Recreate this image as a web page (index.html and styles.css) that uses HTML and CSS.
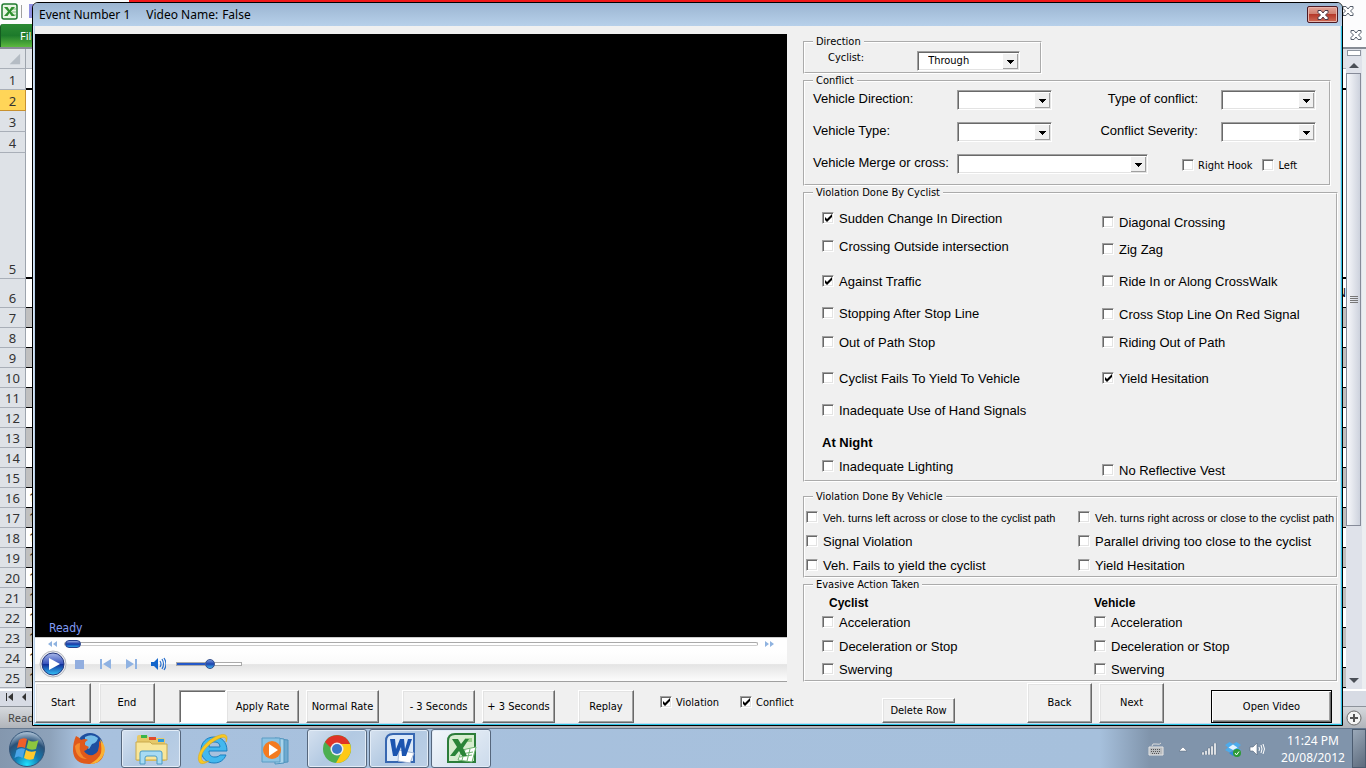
FILE: index.html
```html
<!DOCTYPE html>
<html lang="en">
<head>
<meta charset="utf-8">
<title>Event Number 1</title>
<link rel="stylesheet" href="styles.css">
</head>
<body>
<div class="desktop">
  <div class="excel">
    <div class="accent"><span></span></div>
    <div class="quickbar">
      <svg class="excel-mini" viewBox="0 0 17 17"><rect x="1" y="1" width="15" height="15" rx="2" fill="#e8f5e4" stroke="#1f7a2e" stroke-width="1.500"/><path d="M11 6h4M11 9h4M11 12h4" stroke="#7fba7a"/><path d="M3 4h3.500l2 3 2-3H14l-4 4.500 4 4.500h-3.500l-2-3-2 3H3l4-4.500z" fill="#2f8f2f"/></svg>
      <span class="bar-sep"></span><span class="save-chip"></span>
      <svg class="x-mark" viewBox="0 0 12 10"><path d="M1 .5h3l2 2.500 2-2.500h3v2L8.500 5 11 7.500v2H8L6 7 4 9.500H1v-2L3.500 5 1 2.500z" fill="#fff" stroke="#555e6b"/></svg>
    </div>
    <div class="ribbon">
      <span class="file-tab">File</span>
      <svg class="x-mark ribbon-x" viewBox="0 0 12 10"><path d="M1 .5h3l2 2.500 2-2.500h3v2L8.500 5 11 7.500v2H8L6 7 4 9.500H1v-2L3.500 5 1 2.500z" fill="#fff" stroke="#555e6b"/></svg>
    </div>
    <div class="sheet-area">
      <table class="sheet">
        <tbody>
        <tr class="letters"><th><svg viewBox="0 0 26 20" class="corner"><path d="M21 5v11H10z" fill="#b5bcc4"/></svg></th><td></td><td class="edge"></td></tr>
        <tr class="short thick"><th>1</th><td></td><td class="edge"></td></tr>
        <tr class="short chosen"><th>2</th><td></td><td class="edge"></td></tr>
        <tr class="short"><th>3</th><td></td><td class="edge">I</td></tr>
        <tr class="short"><th>4</th><td></td><td class="edge"></td></tr>
        <tr class="tall thick"><th>5</th><td></td><td class="edge"><span class="vertical">Parallel driving too close</span></td></tr>
        <tr class="mid line"><th>6</th><td></td><td class="edge">N</td></tr>
        <tr class="line gray"><th>7</th><td></td><td class="edge"></td></tr>
        <tr class="line"><th>8</th><td></td><td class="edge"></td></tr>
        <tr class="line gray"><th>9</th><td></td><td class="edge"></td></tr>
        <tr class="line"><th>10</th><td></td><td class="edge"></td></tr>
        <tr class="line gray"><th>11</th><td></td><td class="edge"></td></tr>
        <tr class="line"><th>12</th><td></td><td class="edge"></td></tr>
        <tr class="line gray"><th>13</th><td></td><td class="edge"></td></tr>
        <tr class="line"><th>14</th><td></td><td class="edge"></td></tr>
        <tr class="line gray"><th>15</th><td></td><td class="edge"></td></tr>
        <tr class="line"><th>16</th><td>1</td><td class="edge"></td></tr>
        <tr class="line gray"><th>17</th><td>1</td><td class="edge"></td></tr>
        <tr class="line"><th>18</th><td>1</td><td class="edge"></td></tr>
        <tr class="line gray"><th>19</th><td>1</td><td class="edge"></td></tr>
        <tr class="line"><th>20</th><td>1</td><td class="edge"></td></tr>
        <tr class="line gray"><th>21</th><td>1</td><td class="edge"></td></tr>
        <tr class="line"><th>22</th><td>1</td><td class="edge"></td></tr>
        <tr class="line gray"><th>23</th><td>1</td><td class="edge"></td></tr>
        <tr class="line"><th>24</th><td>1</td><td class="edge"></td></tr>
        <tr class="line gray"><th>25</th><td>1</td><td class="edge"></td></tr>
        </tbody>
      </table>
      <div class="scrollbar">
        <span class="split"></span>
        <svg viewBox="0 0 16 16" class="scroll-arrow"><path d="M3 11l5-5 5 5z" fill="#4a4f57"/></svg>
        <div class="thumb"><i></i><i></i><i></i><i></i></div>
        <div class="track"></div>
        <svg viewBox="0 0 16 16" class="scroll-arrow"><path d="M3 5l5 5 5-5z" fill="#4a4f57"/></svg>
      </div>
    </div>
    <div class="tabs-row"><svg viewBox="0 0 30 12" class="tab-nav"><path d="M6.500 2v8" stroke="#333"/><path d="M13 2v8L8 6zM26 2v8l-4-4z" fill="#333"/></svg></div>
    <div class="status"><span>Ready</span>
      <svg viewBox="0 0 16 16" class="zoom-plus"><circle cx="8" cy="8" r="7" fill="#f4f4f4" stroke="#6b6b6b"/><path d="M8 4v8M4 8h8" stroke="#555" stroke-width="2"/></svg>
    </div>
  </div>

  <div class="taskbar">
    <button class="start" aria-label="Start menu"><svg viewBox="0 0 38 38"><defs><radialGradient id="orb" cx=".5" cy=".95" r=".9"><stop offset="0" stop-color="#1fe3ff"/><stop offset=".4" stop-color="#1379b0"/><stop offset=".75" stop-color="#2a5178"/><stop offset="1" stop-color="#9fb6cc"/></radialGradient></defs><circle cx="19" cy="19" r="17.500" fill="url(#orb)" stroke="#35567a"/><path d="M11 10q4-3 8-1l-2 9q-4-2-8 0z" fill="#f0602a"/><path d="M20.500 10q4 3 10 0l-2.500 9q-5 2-9.500-1z" fill="#8cc63f"/><path d="M8.500 20q4-3 8.500-1l-2.500 9q-4-3-8 0z" fill="#4aa5e8"/><path d="M18 20q4 3 10 1l-2.500 8q-5 2-9.500-1z" fill="#ffc92e"/></svg></button>
    <button class="app" aria-label="Firefox"><svg viewBox="0 0 34 34"><circle cx="18" cy="14" r="13" fill="#1d4fa0"/><path d="M13 5q7-4 13 1-1 5-6 6l-3 5-4-3z" fill="#74bce8"/><path d="M4 4q3 1 5 4 4-2 7 0-4 2-3 5l4 2q-2 3-5 4 3 5 9 4 7-2 6-14 6 5 5 12-2 11-15 11Q2 32 1 19 1 10 4 4z" fill="#e0591a"/><path d="M28 7q7 8 4 15-4 10-14 10 9-5 11-11 1-7-1-14z" fill="#f9b233"/><path d="M3 14q2-3 5-3-2 12 7 16-11 0-12-13z" fill="#f58a2c"/></svg></button>
    <button class="app open" aria-label="Windows Explorer"><svg viewBox="0 0 34 34"><path d="M3 5q0-2 2-2h8l2 3h14q2 0 2 2v21H3z" fill="#e6c868"/><path d="M7 3h6v3H7z" fill="#39b54a"/><path d="M15 5h7v3h-7z" fill="#e14b2d"/><path d="M24 7h6v3h-6z" fill="#2e9bdc"/><path d="M2 10h14l2 2h15v16H2z" fill="#f8e69a" stroke="#c9a94d"/><path d="M6 32V21q0-2 2-2h18q2 0 2 2v11h-5v-6q0-2-2-2h-8q-2 0-2 2v6z" fill="#a7dbf3" stroke="#4b9ac4"/></svg></button>
    <button class="app" aria-label="Internet Explorer"><svg viewBox="0 0 34 34"><path fill-rule="evenodd" d="M18 5c8 0 13 5 13 14H13c0 4 2 6 6 6 3 0 4-1 5-2h6c-2 5-6 8-12 8C10 31 5 25 5 18S10 5 18 5zm-5 10h11c0-3-2-5-5-5-4 0-6 2-6 5z" fill="#43b8ee" stroke="#1b7fc0"/><path d="M4 31C-2 24 9 9 21 4c9-4 12 0 9 6 1-5-2-6-8-3C12 12 3 22 6 28q2 3 7 1-6 4-9 2z" fill="#f8c822" stroke="#d9a414" stroke-width=".5"/></svg></button>
    <button class="app" aria-label="Media Player"><svg viewBox="0 0 34 34"><path d="M21 7l9 1v22l-9 1z" fill="#6faad0" stroke="#4e93bd"/><path d="M17 6l9 1v24l-9 1z" fill="#a8d4ec" stroke="#4e93bd"/><path d="M4 6h18v24H4z" fill="#8cc3e3" stroke="#5a9cc4"/><circle cx="14" cy="18" r="9" fill="#f47b20"/><path d="M11 12l9 6-9 6z" fill="#fff"/></svg></button>
    <button class="app open" aria-label="Chrome"><svg viewBox="0 0 34 34"><circle cx="17" cy="17" r="14" fill="#4caf50"/><path d="M5 10a14 14 0 0 1 25 2H17a6 6 0 0 0-6 4z" fill="#df3326"/><path d="M30 12a14 14 0 0 1-14 19l6-11q2-4-1-8z" fill="#fdc916"/><circle cx="17" cy="17" r="6.500" fill="#eee"/><circle cx="17" cy="17" r="5" fill="#3a78c9"/></svg></button>
    <button class="app open" aria-label="Word"><svg viewBox="0 0 34 34"><path d="M4 9q0-7 7-7h21v28H4z" fill="#dce9f8" stroke="#3767b1" stroke-width="2"/><path d="M17 18l15 3-4 10-12-2z" fill="#fff" stroke="#a6b8d6"/><path d="M8 7h5l1 10 4-10h4l1 10 3-10h4l-6 17h-4l-1-9-4 9h-4z" fill="#1c55b0"/></svg></button>
    <button class="app open lit" aria-label="Excel"><svg viewBox="0 0 34 34"><path d="M4 9q0-7 7-7h20v28H4z" fill="#d6edcf" stroke="#2c7d3a" stroke-width="2"/><path d="M21 6h7v4h-7z" fill="#9bd08e"/><path d="M18 18l14-3-4 15-14-2z" fill="#fff" stroke="#6bb36e"/><path d="M17 22l12-2M16 25l12-2M21 18l-3 10M26 17l-3 12" stroke="#6bb36e"/><path d="M8 7h6l3 5 4-5h4l-6 9 4 8h-5l-3-5-4 5H6l7-9z" fill="#2a8438"/></svg></button>
    <div class="tray">
      <svg class="t-key" viewBox="0 0 16 14"><path d="M4 4q0-3 4-2t5-1" fill="none" stroke="#ddd"/><path d="M1 5h14v8H1z" fill="#b9bcbf" stroke="#e5e5e5"/><path d="M3 7.500h10M3 9.500h10M4 11.500h8" stroke="#555" stroke-dasharray="1 1"/></svg>
      <svg class="t-up" viewBox="0 0 10 6"><path d="M1 5l4-4 4 4z" fill="#fff" stroke="#56657a" stroke-width=".5"/></svg>
      <svg class="t-net" viewBox="0 0 16 12"><path d="M1 9h2v3H1zM4 7.500h2V12H4zM7 5h2v7H7zM10 3h2v9h-2zM13 0h2v12h-2z" fill="#fff" stroke="#4d5d72" stroke-width=".4"/></svg>
      <svg class="t-drop" viewBox="0 0 16 16"><path d="M4.500 1L8 3l3.500-2L16 4l-3 2.500L16 9l-4.500 2.500L8 9l-3.500 2.500L0 9l3-2.500L0 4z" fill="#4dabeb"/><path d="M8 3.500l4.500 3L8 9 3.500 6.500z" fill="#e3f4ff"/><path d="M4 12l4-2 4 2-4 3z" fill="#2f8ddb"/><circle cx="12" cy="12" r="4" fill="#2d9b37"/><path d="M10 12l1.500 2 2.500-3.500" fill="none" stroke="#fff"/></svg>
      <svg class="t-vol" viewBox="0 0 16 14"><path d="M1 5h3l4-4v12L4 9H1z" fill="#fff" stroke="#55657a" stroke-width=".6"/><path d="M10 5q1 2 0 4M12 3q2 4 0 8M14 2q3 5 0 10" fill="none" stroke="#fff"/></svg>
      <div class="clock"><span>11:24 PM</span><span>20/08/2012</span></div>
      <span class="peek"></span>
    </div>
  </div>

  <form class="dialog">
    <header class="titlebar">
      <span>Event Number 1</span><span>Video Name:</span><span>False</span>
      <button type="button" class="close" aria-label="Close"><svg viewBox="0 0 12 10"><path d="M1 .5h3l2 2.500 2-2.500h3v2L8.500 5 11 7.500v2H8L6 7 4 9.500H1v-2L3.500 5 1 2.500z" fill="#fff" stroke="#4b3a48"/></svg></button>
    </header>
    <div class="body">
      <section class="player">
        <div class="screen"><span>Ready</span></div>
        <div class="seek">
          <svg class="skip" viewBox="0 0 10 6"><path d="M5 0v6L1 3zM10 0v6L6 3z" fill="#8fb3e0"/></svg>
          <div class="seek-track"><span class="seek-knob"></span></div>
          <svg class="skip" viewBox="0 0 10 6"><path d="M0 0v6l4-3zM5 0v6l4-3z" fill="#8fb3e0"/></svg>
        </div>
        <div class="controls">
          <button type="button" class="icon play" aria-label="Play"><svg viewBox="0 0 28 28"><defs><linearGradient id="pl" x2="0" y2="1"><stop offset="0" stop-color="#a9b9ea"/><stop offset=".48" stop-color="#3a55bd"/><stop offset=".5" stop-color="#102a96"/><stop offset="1" stop-color="#35c6fa"/></linearGradient></defs><circle cx="14" cy="14" r="13" fill="#e9ebf0" stroke="#b6b8be"/><circle cx="14" cy="14" r="11" fill="url(#pl)" stroke="#24367c"/><path d="M10 8l11 6-11 6z" fill="#fff"/></svg></button>
          <button type="button" class="icon" aria-label="Stop"><svg viewBox="0 0 16 16"><path d="M4 4h9v9H4z" fill="#92aedf"/></svg></button>
          <button type="button" class="icon" aria-label="Previous"><svg viewBox="0 0 16 16"><path d="M3 3h2v10H3zM14 3v10L6 8z" fill="#8fb2e2"/></svg></button>
          <button type="button" class="icon" aria-label="Next track"><svg viewBox="0 0 16 16"><path d="M3 3v10l8-5zM12 3h2v10h-2z" fill="#8fb2e2"/></svg></button>
          <button type="button" class="icon" aria-label="Mute"><svg viewBox="0 0 16 16"><path d="M1 6h3l4-4v12l-4-4H1z" fill="#1466cb"/><path d="M10 5q2 3 0 6M12 3q3 5 0 10M14 2q4 6 0 12" fill="none" stroke="#2a70cc" stroke-width="1.200"/></svg></button>
          <div class="volume"><span class="vol-fill"></span><span class="vol-knob"></span></div>
        </div>
      </section>

      <section class="panel">
        <fieldset class="g-direction">
          <legend>Direction</legend>
          <label for="dir">Cyclist:</label>
          <select id="dir"><option>Through</option></select>
        </fieldset>

        <fieldset class="g-conflict big">
          <legend>Conflict</legend>
          <div class="c-row">
            <label for="vd">Vehicle Direction:</label><select id="vd"><option></option></select>
            <label for="tc" class="r">Type of conflict:</label><select id="tc"><option></option></select>
          </div>
          <div class="c-row">
            <label for="vt">Vehicle Type:</label><select id="vt"><option></option></select>
            <label for="cs" class="r">Conflict Severity:</label><select id="cs"><option></option></select>
          </div>
          <div class="c-row merge">
            <label for="vm">Vehicle Merge or cross:</label><select id="vm"><option></option></select>
            <label class="chk ui"><input type="checkbox">Right Hook</label>
            <label class="chk ui"><input type="checkbox">Left</label>
          </div>
        </fieldset>

        <fieldset class="g-cyclist big">
          <legend>Violation Done By Cyclist</legend>
          <div class="col-a">
            <label class="chk"><input type="checkbox" checked>Sudden Change In Direction</label>
            <label class="chk"><input type="checkbox">Crossing Outside intersection</label>
            <label class="chk"><input type="checkbox" checked>Against Traffic</label>
            <label class="chk"><input type="checkbox">Stopping After Stop Line</label>
            <label class="chk"><input type="checkbox">Out of Path Stop</label>
            <label class="chk"><input type="checkbox">Cyclist Fails To Yield To Vehicle</label>
            <label class="chk"><input type="checkbox">Inadequate Use of Hand Signals</label>
            <strong>At Night</strong>
            <label class="chk"><input type="checkbox">Inadequate Lighting</label>
          </div>
          <div class="col-b">
            <label class="chk"><input type="checkbox">Diagonal Crossing</label>
            <label class="chk"><input type="checkbox">Zig Zag</label>
            <label class="chk"><input type="checkbox">Ride In or Along CrossWalk</label>
            <label class="chk"><input type="checkbox">Cross Stop Line On Red Signal</label>
            <label class="chk"><input type="checkbox">Riding Out of Path</label>
            <label class="chk"><input type="checkbox" checked>Yield Hesitation</label>
            <label class="chk"><input type="checkbox">No Reflective Vest</label>
          </div>
        </fieldset>

        <fieldset class="g-vehicle big">
          <legend>Violation Done By Vehicle</legend>
          <label class="chk small"><input type="checkbox">Veh. turns left across or close to the cyclist path</label>
          <label class="chk small"><input type="checkbox">Veh. turns right across or close to the cyclist path</label>
          <label class="chk"><input type="checkbox">Signal Violation</label>
          <label class="chk"><input type="checkbox">Parallel driving too close to the cyclist</label>
          <label class="chk"><input type="checkbox">Veh. Fails to yield the cyclist</label>
          <label class="chk"><input type="checkbox">Yield Hesitation</label>
        </fieldset>

        <fieldset class="g-evasive big">
          <legend>Evasive Action Taken</legend>
          <div class="ev-col">
            <strong>Cyclist</strong>
            <label class="chk"><input type="checkbox">Acceleration</label>
            <label class="chk"><input type="checkbox">Deceleration or Stop</label>
            <label class="chk"><input type="checkbox">Swerving</label>
          </div>
          <div class="ev-col ev-vehicle">
            <strong>Vehicle</strong>
            <label class="chk"><input type="checkbox">Acceleration</label>
            <label class="chk"><input type="checkbox">Deceleration or Stop</label>
            <label class="chk"><input type="checkbox">Swerving</label>
          </div>
        </fieldset>
      </section>
    </div>

    <footer class="actions">
      <button type="button" class="btn tallbtn w56">Start</button>
      <button type="button" class="btn tallbtn w56 end">End</button>
      <input type="text" class="rate" aria-label="Rate">
      <button type="button" class="btn w73">Apply Rate</button>
      <button type="button" class="btn w73 normal">Normal Rate</button>
      <button type="button" class="btn w73 minus">- 3 Seconds</button>
      <button type="button" class="btn w73 plus">+ 3 Seconds</button>
      <button type="button" class="btn w56 replay">Replay</button>
      <label class="chk ui f-viol"><input type="checkbox" checked>Violation</label>
      <label class="chk ui f-conf"><input type="checkbox" checked>Conflict</label>
      <button type="button" class="btn w73 delete">Delete Row</button>
      <button type="button" class="btn tallbtn w64 back">Back</button>
      <button type="button" class="btn tallbtn w64 next">Next</button>
      <button type="button" class="btn open-video">Open Video</button>
    </footer>
  </form>
</div>
</body>
</html>
```
FILE: styles.css
```css
* { box-sizing: border-box; }
body { margin: 0; font: 11px/14px "DejaVu Sans Condensed", "Noto Sans", sans-serif; color: #000; }
svg { display: block; }
button { font: inherit; color: inherit; }
.desktop { position: relative; height: 100vh; min-height: 768px; overflow: hidden; display: flex; flex-direction: column; background: #fff; }

/* spreadsheet window */
.excel { flex: 1; display: flex; flex-direction: column; min-height: 0; overflow: hidden; background: #dee2e8; font-family: "Noto Sans", sans-serif; }
.accent { height: 2px; padding: 0 106px 0 129px; background: #fcfcfd; flex-shrink: 0; }
.accent span { display: block; height: 2px; background: #f01818; }
.quickbar { display: flex; align-items: center; height: 22px; background: #fcfcfd; padding: 0 12px 4px 0; }
.excel-mini { width: 17px; height: 17px; margin-left: 1px; }
.bar-sep { width: 1px; height: 13px; margin: 0 7px 0 3px; background: #a0a0a0; }
.save-chip { width: 6px; height: 14px; background: #8f8fe0; }
.x-mark { width: 12px; height: 10px; margin-left: auto; }
.ribbon { display: flex; height: 25px; align-items: center; background: #fcfcfd; border-bottom: 2px solid #868b94; padding-right: 4px; }
.ribbon-x { margin-bottom: 2px; }
.file-tab { width: 60px; height: 23px; padding: 4px 0 0 19px; color: #fff; background: linear-gradient(#2c8a34, #1d7a2b 50%, #5cb83f); border-left: 1px solid #145c20; border-radius: 3px 3px 0 0; line-height: 16px; }
.sheet-area { flex: 1; display: flex; min-height: 0; overflow: hidden; }
.sheet { flex: 1; table-layout: fixed; border-collapse: separate; border-spacing: 0; background: #fff; align-self: flex-start; }
.sheet th { width: 26px; height: 20px; padding: 0; font: 13px/18px "Noto Sans", sans-serif; color: #333; vertical-align: bottom; text-align: center; background: #dee2e7; border-right: 1px solid #9da4ad; border-bottom: 1px solid #a9afb8; }
.sheet td { padding: 0 0 0 3px; font-size: 12px; line-height: 16px; border-bottom: 1px solid #fff; }
.sheet td.edge { width: 6px; padding: 0; overflow: hidden; }
.vertical { display: block; width: 6px; height: 120px; overflow: hidden; writing-mode: vertical-rl; font-size: 10px; line-height: 10px; color: #1b2c5c; white-space: nowrap; }
.sheet .letters td { background: #dee2e7; border-bottom: 1px solid #a9afb8; }
.sheet .short th { height: 21px; }
.sheet .tall th { height: 126px; }
.sheet .mid th { height: 29px; }
.sheet .letters th { height: 20px; }
.corner { width: 25px; height: 19px; }
.sheet .thick td { border-bottom: 2px solid #000; }
.sheet .line td { border-bottom: 1px solid #000; }
.sheet .gray td { background: #c0c0c0; }
.sheet .chosen th { background: #ffd558; border-color: #c8912f; }
.scrollbar { width: 20px; display: flex; flex-direction: column; align-items: flex-start; background: #dfe2ea; border-right: 4px solid #eceef1; }
.split { width: 14px; height: 6px; margin: 1px; border: 1px solid #8e95a0; background: #fff; flex-shrink: 0; }
.scroll-arrow { width: 16px; height: 16px; flex-shrink: 0; }
.thumb { width: 15px; flex: 452; border: 1px solid #868b99; background: linear-gradient(90deg, #f7f8fb, #cdd2dd); display: flex; flex-direction: column; align-items: center; justify-content: center; gap: 1px; }
.thumb i { width: 8px; height: 1px; background: #777; }
.track { flex: 148; }
.tabs-row { height: 17px; background: #d7dbe4; border-top: 2px solid #fff; }
.tab-nav { width: 30px; height: 12px; }
.status { display: flex; align-items: center; justify-content: space-between; height: 22px; padding: 0 4px 0 8px; background: linear-gradient(#d6d9dd, #b0b4ba); border-top: 1px solid #8d939b; color: #444; }
.zoom-plus { width: 16px; height: 16px; }

/* taskbar */
.taskbar { height: 40px; display: flex; align-items: stretch; padding-left: 5px; background: linear-gradient(90deg, #8497ae, #8da2ba 50px, #a8c1de 80px, #a6c0dc 1100px, #8094ab 1150px); border-top: 1px solid #65788f; }
.start, .app { padding: 0; border: 1px solid transparent; background: none; display: flex; align-items: center; justify-content: center; }
.start { width: 44px; margin-right: 10px; }
.start svg { width: 38px; height: 38px; }
.app { width: 60px; margin-right: 2px; border-radius: 3px; }
.app svg { width: 34px; height: 34px; }
.app.open { border-color: #56677d; background: linear-gradient(135deg, #d5e1ef, #b2c9e2 50%, #bdd0e6); box-shadow: inset 0 0 0 1px #e2ecf7; }
.app.lit { background: linear-gradient(135deg, #f3f7fb, #cbdaeb); }
.tray { margin-left: auto; display: flex; align-items: center; color: #fff; }
.t-key { width: 16px; height: 14px; margin-right: 14px; }
.t-up { width: 10px; height: 6px; margin-right: 13px; }
.t-net { width: 16px; height: 12px; margin-right: 8px; }
.t-drop { width: 16px; height: 16px; margin-right: 8px; }
.t-vol { width: 16px; height: 14px; margin-right: 17px; }
.clock { width: 62px; display: flex; flex-direction: column; text-align: center; font: 12px/17px "Noto Sans", sans-serif; white-space: nowrap; align-items: center; }
.peek { width: 14px; margin-left: 8px; align-self: stretch; border: 1px solid #4c5c70; background: linear-gradient(135deg, #9aa8b8, #5d6b7d); }

/* dialog window */
.dialog { position: absolute; left: 32px; right: 23px; top: 2px; bottom: 42px; display: flex; flex-direction: column; margin: 0; background: #f0f0f0; border: 1px solid #000; border-radius: 6px 6px 0 0; box-shadow: inset 1px 0 #d9e8f8, inset -1px -1px #2cc4e4, inset -2px -2px #c4dcf0, inset 2px 0 #b9d1ea; overflow: hidden; }
.titlebar { display: flex; align-items: center; height: 23px; padding: 0 4px 0 6px; gap: 16px; font: 12px/16px "Noto Sans", sans-serif; background: linear-gradient(#9bb5d1, #b7d0ea); flex-shrink: 0; }
.titlebar span:last-of-type { margin-left: -12px; }
.close { width: 31px; height: 17px; margin-left: auto; padding: 0; display: flex; align-items: center; justify-content: center; border: 1px solid #4c1a24; border-radius: 2px; background: linear-gradient(#e3a498, #d08070 45%, #b5392a 50%, #cf6b55); box-shadow: inset 0 0 0 1px #e8b5ac; }
.close svg { width: 12px; height: 10px; }
.body { flex: 1; min-height: 0; display: grid; grid-template-columns: minmax(0, 752fr) minmax(0, 535fr); column-gap: 16px; padding: 0 4px 0 2px; }

/* player */
.player { margin: 8px 0 1px; display: flex; flex-direction: column; min-height: 0; }
.screen { flex: 1; background: #000; display: flex; align-items: flex-end; padding: 0 14px 2px; color: #829cf5; font-size: 12px; }
.seek { display: flex; align-items: center; gap: 7px; height: 13px; padding: 0 12px; background: #fff; border-top: 1px solid #ccc; }
.skip { width: 10px; height: 6px; }
.seek-track { flex: 1; height: 4px; border: 1px solid #a9a9a9; border-bottom-color: #ccc; border-radius: 2px; display: flex; align-items: center; }
.seek-knob { width: 16px; height: 8px; border-radius: 4px; flex-shrink: 0; border: 1px solid #24408f; background: linear-gradient(#93a8e4, #1335a4 50%, #2ba2ea); }
.controls { display: flex; align-items: center; height: 32px; padding: 0 0 4px 4px; background: linear-gradient(#fff, #fafafa 45%, #e4e4e4 47%, #fcfcfc); border-bottom: 1px solid #a0a0a0; }
.icon { width: 16px; height: 16px; padding: 0; margin-right: 10px; border: 0; background: none; }
.icon.play { width: 28px; height: 28px; margin-right: 4px; }
.icon:last-of-type { margin: 0 10px 0 1px; }
.volume { width: 66px; height: 4px; border: 1px solid #aaa; background: #fff; display: flex; align-items: center; }
.vol-fill { width: 28px; height: 2px; background: #2458c8; }
.vol-knob { width: 10px; height: 10px; border-radius: 50%; border: 1px solid #34508f; background: linear-gradient(#7596dd, #1b42ad 50%, #43b7f0); }

/* form groups */
.panel { display: flex; flex-direction: column; align-items: stretch; padding-top: 9px; min-width: 0; }
fieldset { min-width: 0; margin: 0; padding: 0; border: 2px groove #fff; white-space: nowrap; }
legend { height: 14px; margin-left: 8px; padding: 0 3px; line-height: 14px; }
.big { font: 13px/16px "Liberation Sans", Arial, sans-serif; }
.big legend { margin-left: 0; font: 11px/14px "DejaVu Sans Condensed", "Noto Sans", sans-serif; }
.g-direction { width: 239px; height: 39px; }
.g-direction label { display: inline-block; width: 86px; margin-left: 23px; padding-top: 2px; vertical-align: top; }
.g-direction select { width: 103px; padding-left: 10px; margin-top: 2px; }
select { appearance: none; width: 95px; height: 20px; padding: 0 18px 0 4px; font: 11px/14px "DejaVu Sans Condensed", "Noto Sans", sans-serif; color: #000; border: 1px solid; border-color: #a0a0a0 #fff #fff #a0a0a0; border-radius: 0; box-shadow: inset 1px 1px #696969, inset -1px -1px #e3e3e3; background: #fff url("data:image/svg+xml,%3Csvg xmlns='http://www.w3.org/2000/svg' width='17' height='17'%3E%3Cpath fill='%23696969' d='M0 0h17v17H0z'/%3E%3Cpath fill='%23fff' d='M0 0h16v16H0z'/%3E%3Cpath fill='%23a0a0a0' d='M1 1h15v15H1z'/%3E%3Cpath fill='%23f0f0f0' d='M1 1h14v14H1z'/%3E%3Cpath d='M5 7h7v1h-1v1h-1v1H9v1H8v-1H7V9H6V8H5z'/%3E%3C/svg%3E") no-repeat right 0 top 1px; }
.g-conflict { width: 528px; height: 112px; padding-left: 8px; }
.c-row { display: grid; grid-template-columns: 144px 95px 1fr 95px; align-items: start; height: 32px; padding: 2px 13px 0 0; }
.c-row label { line-height: 18px; }
.c-row .r { padding: 0 23px 0 0; text-align: right; }
.c-row.merge { grid-template-columns: 144px 191px auto 1fr; }
.merge select { width: 191px; }
.merge .chk { margin: 4px 0 0 34px; }
.merge .chk:last-child { margin-left: 10px; }
.chk { display: flex; align-items: center; gap: 5px; height: 16px; white-space: nowrap; }
.ui { gap: 4px; font: 11px/14px "DejaVu Sans Condensed", "Noto Sans", sans-serif; }
input[type="checkbox"] { appearance: none; flex-shrink: 0; width: 12px; height: 12px; margin: 0 0 2px; border: 1px solid; border-color: #a0a0a0 #fff #fff #a0a0a0; box-shadow: inset 1px 1px #696969, inset -1px -1px #e3e3e3; background: #fff; }
input[type="checkbox"]:checked { background: #fff url("data:image/svg+xml,%3Csvg xmlns='http://www.w3.org/2000/svg' width='10' height='10'%3E%3Cpath d='M2 4l2 2 5-5v3L4 9 2 7z'/%3E%3C/svg%3E") no-repeat 0 0; }
.g-cyclist { height: 296px; display: grid; grid-template-columns: 280px 1fr; padding: 11px 0 0 17px; }
.g-cyclist legend, .g-evasive legend { margin-left: -9px; }
.col-a { display: grid; grid-template-rows: 28px 35px 32px 29px 36px 32px 32px 24px 16px; }
.col-b { display: grid; grid-template-rows: 27px 32px 33px 28px 36px 92px 16px; padding-top: 4px; }
.g-vehicle { height: 88px; margin-top: 8px; display: grid; grid-template-columns: 272px 1fr; grid-template-rows: 24px 24px 16px; padding: 6px 0 0 1px; }
.g-vehicle legend { margin-left: 7px; }
.small { font-size: 11px; }
.g-evasive { height: 104px; display: grid; grid-template-columns: 272px 1fr; padding: 3px 0 0 17px; }
.ev-col { display: grid; grid-template-rows: 20px 24px 23px 16px; }
.ev-col strong { padding-left: 7px; font-size: 12px; }
.ev-vehicle strong { padding-left: 0; }

/* bottom buttons */
.actions { display: flex; align-items: flex-end; flex-shrink: 0; height: 42px; padding: 0 10px 2px 2px; }
.btn { height: 33px; padding: 0; border: 1px solid; border-color: #fff #696969 #696969 #fff; box-shadow: inset -1px -1px #a0a0a0, inset 1px 1px #e3e3e3; background: #f0f0f0; white-space: nowrap; }
.tallbtn { height: 40px; }
.w56 { width: 56px; }
.w64 { width: 65px; }
.w73 { width: 73px; }
.end { margin-left: 8px; }
.rate { width: 47px; height: 33px; margin: 0 0 0 24px; border: 1px solid; border-color: #a0a0a0 #fff #fff #a0a0a0; box-shadow: inset 1px 1px #696969; }
.normal { margin-left: 7px; }
.minus { margin-left: 23px; }
.plus { margin-left: 7px; }
.replay { margin-left: 23px; }
.f-viol { margin: 0 0 12px 26px; }
.f-conf { margin: 0 0 12px 21px; }
.delete { height: 25px; margin-left: auto; }
.back { margin-left: 72px; }
.next { margin-left: 7px; }
.open-video { width: 121px; margin-left: 47px; border-color: #000; box-shadow: inset 1px 1px #fff, inset -1px -1px #696969, inset -2px -2px #a0a0a0; }
```
